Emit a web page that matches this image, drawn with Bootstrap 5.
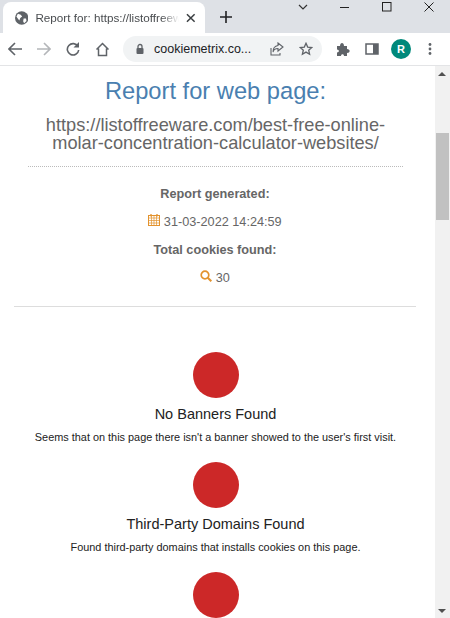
<!DOCTYPE html>
<html lang="en">

<head>
    <meta charset="UTF-8">
    <title>Report for: https://listoffreeware.com</title>
    <link href="https://cdn.jsdelivr.net/npm/bootstrap@5.3.0/dist/css/bootstrap.min.css" rel="stylesheet">
    <style>
        html, body {
            height: 618px;
            overflow: hidden;
        }

        body {
            width: 450px;
            background: #fff;
            font-family: "Liberation Sans", Arial, sans-serif;
            color: #666;
        }

        /* Browser chrome */
        .tab-strip {
            height: 33px;
            background: #dee1e6;
            padding: 2px 0 0 3px;
        }

        .tab-shape {
            width: 202px;
            height: 31px;
            background: #fff;
            border-radius: 8px 8px 0 0;
            padding: 0 9px 0 12px;
            gap: 7px;
        }

        .tab-title {
            width: 144px;
            font-size: 11.7px;
            color: #4a4d50;
            white-space: nowrap;
            -webkit-mask-image: linear-gradient(90deg, #000 88%, transparent);
            mask-image: linear-gradient(90deg, #000 88%, transparent);
        }

        .new-tab {
            margin-left: 15px;
            margin-top: -1px;
        }

        .win-btns {
            margin-left: auto;
            margin-top: -2px;
            gap: 32px;
            padding-right: 16px;
        }

        .tool-row {
            height: 33px;
            background: #fff;
            border-bottom: 1px solid #e3e4e6;
            padding: 0 8px;
        }

        .nav-icons {
            gap: 15px;
        }

        .omni {
            width: 199px;
            height: 26px;
            margin-left: 13px;
            background: #f1f3f4;
            border-radius: 13px;
            padding: 0 9px 0 12px;
            font-size: 12.5px;
            color: #202124;
        }

        .omni-url {
            margin-left: 9px;
            white-space: nowrap;
        }

        .omni-end {
            margin-left: auto;
            gap: 15px;
        }

        .ext-icons {
            margin-left: 14px;
            gap: 15px;
        }

        .avatar-dot {
            width: 20px;
            height: 20px;
            margin: 0 2px 0 -3px;
            border-radius: 50%;
            background: #00897b;
            color: #fff;
            font-size: 11px;
            font-weight: 700;
        }

        /* Page */
        .view-area {
            height: 552px;
        }

        .report-col {
            padding-right: 4px;
            overflow: hidden;
            text-align: center;
        }

        .report-head {
            margin: 10px 28px 0;
            padding-bottom: 14px;
            border-bottom: 1px dotted #bbb;
        }

        .report-head h1 {
            font-size: 23.7px;
            line-height: 30px;
            color: #4a7fb0;
            margin: 0 0 10px;
            font-weight: 400;
        }

        .report-head h2 {
            font-size: 18.2px;
            line-height: 18px;
            color: #666;
            margin: 0;
            font-weight: 400;
            white-space: nowrap;
        }

        .meta-box {
            margin: 0 15px 0 14px;
            padding: 20px 0 20px;
            border-bottom: 1px solid #ddd;
            font-size: 12.7px;
        }

        .meta-box p {
            line-height: 15px;
            margin: 0 0 12.4px;
        }

        .meta-box p:last-child {
            margin-bottom: 0;
        }

        .check-list {
            padding-top: 45px;
        }

        .check-item {
            margin-bottom: 19px;
        }

        .red-dot {
            width: 46px;
            height: 46px;
            border-radius: 50%;
            background: #cc2828;
            margin: 0 auto 7px;
        }

        .check-item h3 {
            font-size: 14.5px;
            line-height: 18px;
            color: #222;
            margin: 0 0 8px;
            font-weight: 400;
        }

        .check-item p {
            font-size: 10.9px;
            line-height: 12px;
            color: #222;
            margin: 0;
        }

        .page-scroll {
            width: 15px;
            background: #f1f1f1;
            position: relative;
        }

        .scroll-thumb {
            position: absolute;
            top: 67px;
            left: 0;
            width: 15px;
            height: 87px;
            background: #c1c1c1;
            border-left: 1px solid #f1f1f1;
            border-right: 1px solid #f1f1f1;
        }

        .arrow-up, .arrow-down {
            position: absolute;
            left: 3px;
            width: 0;
            height: 0;
            border-left: 4px solid transparent;
            border-right: 4px solid transparent;
        }

        .arrow-up {
            top: 6px;
            border-bottom: 4px solid #505050;
        }

        .arrow-down {
            bottom: 5px;
            border-top: 4px solid #505050;
        }
    </style>
</head>

<body>

    <!-- Tabs -->
    <div class="tab-strip d-flex align-items-start">
        <div class="tab-shape d-flex align-items-center">
            <svg width="14" height="14" viewBox="0 0 14 14">
                <circle cx="7" cy="7" r="7" fill="#5f6368"/>
                <path d="M3 2.500l3 1 1.500 2-2 1.500-1 2.500-2-2.500-1-1.500zM9 7.500l2.500 0 .5 2.500-2.500 2.500-1-2z" fill="#fff"/>
            </svg>
            <span class="tab-title">Report for: https://listoffreew</span>
            <svg width="10" height="10" viewBox="0 0 10 10">
                <path d="M1 1l8 8M9 1l-8 8" stroke="#3c4043" stroke-width="1.600"/>
            </svg>
        </div>
        <svg class="new-tab align-self-center" width="12" height="12" viewBox="0 0 12 12">
            <path d="M6 0v12M0 6h12" stroke="#202124" stroke-width="1.600"/>
        </svg>
        <div class="win-btns d-flex align-items-center">
            <svg width="10" height="14" viewBox="0 0 10 14"><path d="M1 5l4 4 4-4" fill="none" stroke="#333" stroke-width="1.200"/></svg>
            <svg width="10" height="14" viewBox="0 0 10 14"><path d="M0 7.500h9" stroke="#222" stroke-width="1"/></svg>
            <svg width="10" height="14" viewBox="0 0 10 14"><rect x=".5" y="2.500" width="8.500" height="8.500" fill="none" stroke="#222"/></svg>
            <svg width="10" height="14" viewBox="0 0 10 14"><path d="M.5 2.500l9 9M9.500 2.500l-9 9" stroke="#222"/></svg>
        </div>
    </div>

    <!-- Toolbar -->
    <div class="tool-row d-flex align-items-center">
        <div class="nav-icons d-flex align-items-center">
            <svg width="14" height="14" viewBox="0 0 14 14"><path d="M14 7H1.500M7 1L1 7l6 6" fill="none" stroke="#5f6368" stroke-width="1.600"/></svg>
            <svg width="14" height="14" viewBox="0 0 14 14"><path d="M0 7h12.500M7 1l6 6-6 6" fill="none" stroke="#b4b6b9" stroke-width="1.600"/></svg>
            <svg width="14" height="14" viewBox="0 0 14 14"><path d="M12 4.500A5.700 5.700 0 1 0 12.700 8" fill="none" stroke="#5f6368" stroke-width="1.600"/><path d="M13 0v5.500H7.500z" fill="#5f6368"/></svg>
            <svg width="15" height="15" viewBox="0 0 15 15"><path d="M1.500 7.500L7.500 1.500l6 6M3.500 6.500v7h8v-7" fill="none" stroke="#5f6368" stroke-width="1.500"/></svg>
        </div>
        <div class="omni d-flex align-items-center">
            <svg width="10" height="12" viewBox="0 0 10 12"><path d="M3 5V3.500a2 2 0 0 1 4 0V5" fill="none" stroke="#5f6368" stroke-width="1.300"/><rect x="1.500" y="5" width="7" height="6" rx="1" fill="#5f6368"/></svg>
            <span class="omni-url">cookiemetrix.co...</span>
            <div class="omni-end d-flex align-items-center">
                <svg width="14" height="14" viewBox="0 0 14 14"><path d="M8 1l5 4-5 4V6.500C5 6.500 3.500 8 3 10c0-4 2-6 5-6.500zM1 6v7h9v-2" fill="none" stroke="#5f6368" stroke-width="1.100"/></svg>
                <svg width="14" height="14" viewBox="0 0 14 14"><path d="M7 1.300l1.700 3.800 4 .4-3 2.700.9 4L7 10.100l-3.600 2.100.9-4-3-2.700 4-.4z" fill="none" stroke="#5f6368" stroke-width="1.300"/></svg>
            </div>
        </div>
        <div class="ext-icons d-flex align-items-center">
            <svg width="14" height="14" viewBox="0 0 14 14"><path d="M1 4h3c0-4 4-4 4 0h3v3c3.500 0 3.500 4 0 4v3H8c0-2.500-3-2.500-3 0H1v-3.500c2.500 0 2.500-3 0-3z" fill="#5f6368"/></svg>
            <svg width="14" height="14" viewBox="0 0 14 14"><rect x="1" y="2" width="12" height="10" fill="none" stroke="#5f6368" stroke-width="1.500"/><rect x="8" y="2" width="5" height="10" fill="#5f6368"/></svg>
            <div class="avatar-dot d-flex align-items-center justify-content-center">R</div>
            <svg width="4" height="14" viewBox="0 0 4 14"><circle cx="2" cy="2.500" r="1.400" fill="#5f6368"/><circle cx="2" cy="7" r="1.400" fill="#5f6368"/><circle cx="2" cy="11.500" r="1.400" fill="#5f6368"/></svg>
        </div>
    </div>

    <!-- Page -->
    <div class="view-area d-flex">
        <div class="report-col flex-grow-1">
            <div class="report-head">
                <h1>Report for web page:</h1>
                <h2>https://listoffreeware.com/best-free-online-<br>molar-concentration-calculator-websites/</h2>
            </div>
            <div class="meta-box">
                <p class="fw-bold">Report generated:</p>
                <p>
                    <svg width="12" height="12" viewBox="0 0 12 12" class="align-baseline">
                        <rect x=".5" y="1.500" width="11" height="10" fill="none" stroke="#e3932e"/>
                        <path d="M.5 4h11M.5 6.500h11M.5 9h11M3.500 1.500v10M6 1.500v10M8.500 1.500v10" stroke="#e3932e" stroke-width=".7"/>
                        <path d="M3 0v2.500M9 0v2.500" stroke="#e3932e" stroke-width="1.300"/>
                    </svg>
                    31-03-2022 14:24:59
                </p>
                <p class="fw-bold">Total cookies found:</p>
                <p>
                    <svg width="12" height="12" viewBox="0 0 12 12" class="align-baseline">
                        <circle cx="5" cy="5" r="3.800" fill="none" stroke="#e3932e" stroke-width="1.700"/>
                        <path d="M7.800 7.800L11.300 11.300" stroke="#e3932e" stroke-width="2"/>
                    </svg>
                    30
                </p>
            </div>
            <div class="check-list">
                <div class="check-item">
                    <div class="red-dot"></div>
                    <h3>No Banners Found</h3>
                    <p>Seems that on this page there isn't a banner showed to the user's first visit.</p>
                </div>
                <div class="check-item">
                    <div class="red-dot"></div>
                    <h3>Third-Party Domains Found</h3>
                    <p>Found third-party domains that installs cookies on this page.</p>
                </div>
                <div class="check-item">
                    <div class="red-dot"></div>
                </div>
            </div>
        </div>
        <div class="page-scroll flex-shrink-0">
            <span class="arrow-up"></span>
            <div class="scroll-thumb"></div>
            <span class="arrow-down"></span>
        </div>
    </div>

    <script src="https://cdn.jsdelivr.net/npm/bootstrap@5.3.0/dist/js/bootstrap.bundle.min.js"></script>
</body>

</html>
